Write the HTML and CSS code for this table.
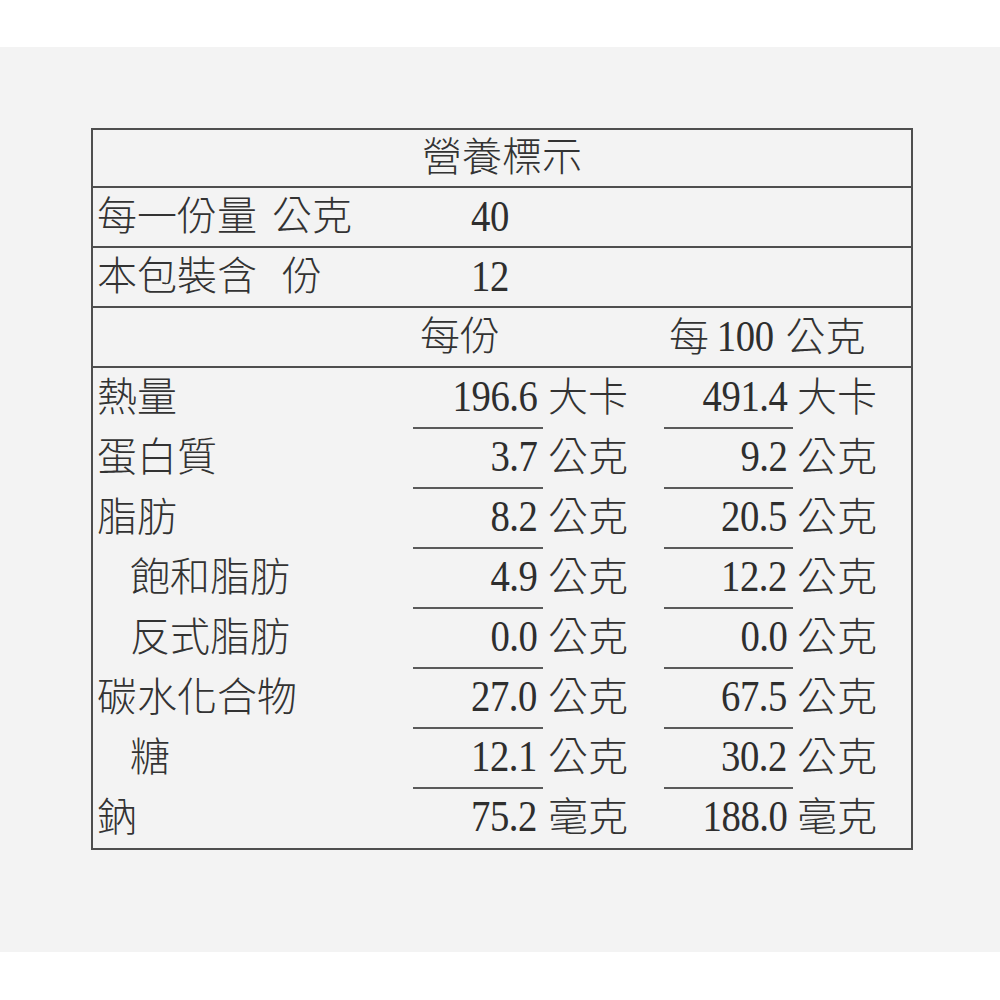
FILE: index.html
```html
<!DOCTYPE html>
<html lang="zh-Hant">
<head>
<meta charset="utf-8">
<title>營養標示</title>
<link rel="stylesheet" href="styles.css">
</head>
<body>
<div class="band">
  <div class="label-table">
    <div class="row title">營養標示</div>
    <div class="row info">
      <div class="lbl">每一份量<span class="gap1"></span>公克</div>
      <div class="val"><span class="d">40</span></div>
    </div>
    <div class="row info">
      <div class="lbl">本包裝含<span class="gap2"></span>份</div>
      <div class="val"><span class="d">12</span></div>
    </div>
    <div class="row head">
      <div class="lbl"></div>
      <div class="h1">每份</div>
      <div class="h2">每<span class="d dl">100</span>公克</div>
    </div>
    <div class="nutrients">
      <div class="nrow"><div class="lbl">熱量</div><div class="num"><span class="d">196.6</span></div><div class="unit">大卡</div><div class="num n2"><span class="d">491.4</span></div><div class="unit u2">大卡</div></div>
      <div class="nrow"><div class="lbl">蛋白質</div><div class="num"><span class="d">3.7</span></div><div class="unit">公克</div><div class="num n2"><span class="d">9.2</span></div><div class="unit u2">公克</div></div>
      <div class="nrow"><div class="lbl">脂肪</div><div class="num"><span class="d">8.2</span></div><div class="unit">公克</div><div class="num n2"><span class="d">20.5</span></div><div class="unit u2">公克</div></div>
      <div class="nrow"><div class="lbl sub">飽和脂肪</div><div class="num"><span class="d">4.9</span></div><div class="unit">公克</div><div class="num n2"><span class="d">12.2</span></div><div class="unit u2">公克</div></div>
      <div class="nrow"><div class="lbl sub">反式脂肪</div><div class="num"><span class="d">0.0</span></div><div class="unit">公克</div><div class="num n2"><span class="d">0.0</span></div><div class="unit u2">公克</div></div>
      <div class="nrow"><div class="lbl">碳水化合物</div><div class="num"><span class="d">27.0</span></div><div class="unit">公克</div><div class="num n2"><span class="d">67.5</span></div><div class="unit u2">公克</div></div>
      <div class="nrow"><div class="lbl sub">糖</div><div class="num"><span class="d">12.1</span></div><div class="unit">公克</div><div class="num n2"><span class="d">30.2</span></div><div class="unit u2">公克</div></div>
      <div class="nrow last"><div class="lbl">鈉</div><div class="num"><span class="d">75.2</span></div><div class="unit">毫克</div><div class="num n2"><span class="d">188.0</span></div><div class="unit u2">毫克</div></div>
    </div>
  </div>
</div>
</body>
</html>
```

FILE: styles.css
```css
html, body {
  margin: 0;
  padding: 0;
  background: #ffffff;
}

body {
  font-family: "Liberation Serif", "Noto Sans CJK TC", serif;
  font-size: 40px;
  font-weight: 300;
  color: #333333;
}

.band {
  margin-top: 47px;
  height: 905px;
  background: #f3f3f3;
  padding-top: 81px;
  padding-left: 91px;
  box-sizing: border-box;
}

.label-table {
  width: 822px;
  border: 2px solid #4e4e4e;
  box-sizing: border-box;
}

.row {
  height: 60px;
  border-bottom: 2px solid #4e4e4e;
  box-sizing: border-box;
  line-height: 58px;
}

.row:first-child {
  height: 58px;
  line-height: 56px;
}

.title {
  text-align: center;
}

.info,
.head,
.nrow {
  display: grid;
  grid-template-columns: 320px 130px 121px 129px 1fr;
}

.lbl {
  padding-left: 4px;
  white-space: nowrap;
}

.gap1 {
  display: inline-block;
  width: 15px;
}

.gap2 {
  display: inline-block;
  width: 25px;
}

/* Condensed, slightly taller Times-style digits */
.d {
  display: inline-block;
  font-size: 44px;
  font-weight: 400;
  letter-spacing: -0.5px;
  color: #2e2e2e;
  transform: scaleX(0.88);
  transform-origin: right center;
}

.val .d {
  transform-origin: left center;
}

.dl {
  transform-origin: center center;
  margin: 0 8px 0 4px;
}

.val {
  grid-column: 2 / 4;
  padding-left: 58px;
}

.h1 {
  grid-column: 2 / 4;
  padding-left: 7px;
}

.h2 {
  grid-column: 4 / 6;
  padding-left: 5px;
  white-space: nowrap;
}

.nrow {
  height: 60px;
  line-height: 60px;
}

.nrow .sub {
  padding-left: 37px;
}

.num {
  text-align: right;
  padding-right: 6px;
  border-bottom: 2px solid #5a5a5a;
  line-height: 58px;
}

.nrow.last .num {
  border-bottom: none;
  line-height: 58px;
}

.unit {
  padding-left: 5px;
  white-space: nowrap;
}

.unit.u2 {
  padding-left: 4px;
}
```
